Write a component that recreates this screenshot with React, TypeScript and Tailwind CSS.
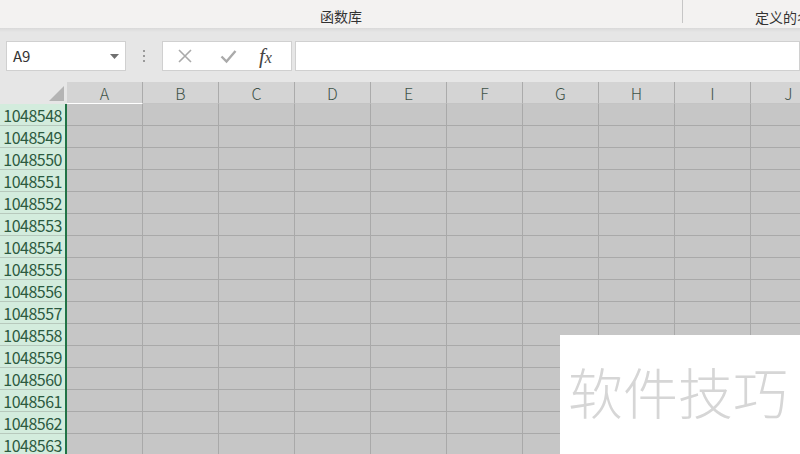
const COLS = ["A", "B", "C", "D", "E", "F", "G", "H", "I", "J"];
const ROWS = Array.from({ length: 16 }, (_, i) => 1048548 + i);

export default function App() {
  return (
    <div
      className="relative w-[800px] h-[454px] overflow-hidden bg-[#e6e6e6]"
      style={{ fontFamily: '"Noto Sans CJK SC", "Noto Sans", sans-serif' }}
    >
      {/* Ribbon group labels */}
      <div className="flex h-[28px] bg-[#f3f2f1] text-[14px] text-[#333]">
        <div className="w-[682px] shrink-0 flex items-start justify-center pt-[6px] leading-[20px]">函数库</div>
        <div className="w-px h-[23px] shrink-0 bg-[#c6c6c6]" />
        <div className="flex-1 min-w-0 overflow-hidden pl-[72px] pt-[7px] leading-[20px] whitespace-nowrap">定义的名称</div>
      </div>
      <div className="h-[4px] bg-gradient-to-b from-[#d9d9d9] to-[#e6e6e6]" />

      {/* Formula bar */}
      <div className="flex items-center h-[50px] pl-[6px] pb-[2px]">
        <div className="w-[120px] h-[30px] shrink-0 bg-white border border-[#d0d0d0] flex items-center justify-between pl-[6px] pr-[6px] text-[15px] text-[#333]">
          <span>A9</span>
          <svg width="9" height="5" viewBox="0 0 9 5"><path d="M0 0h9L4.5 5z" fill="#707070" /></svg>
        </div>
        <div className="w-[36px] shrink-0 flex flex-col items-center gap-[3px]">
          <span className="w-[2px] h-[2px] bg-[#9a9a9a]" />
          <span className="w-[2px] h-[2px] bg-[#9a9a9a]" />
          <span className="w-[2px] h-[2px] bg-[#9a9a9a]" />
        </div>
        <div className="w-[130px] h-[30px] shrink-0 bg-white border border-[#d0d0d0] flex items-center">
          <svg className="ml-[14px]" width="16" height="16" viewBox="0 0 16 16">
            <path d="M2 2l12 12M14 2L2 14" stroke="#aaaaaa" strokeWidth="1.6" />
          </svg>
          <svg className="ml-[27px]" width="17" height="16" viewBox="0 0 17 16">
            <path d="M1.5 8.5l5 5L15.5 3" stroke="#aaaaaa" strokeWidth="2.4" fill="none" />
          </svg>
          <span
            className="ml-[22px] text-[21px] italic text-[#444] leading-none"
            style={{ fontFamily: '"Liberation Serif", serif' }}
          >
            f<span className="text-[16px]">x</span>
          </span>
        </div>
        <div className="flex-1 h-[30px] ml-[3px] bg-white border border-[#d0d0d0]" />
      </div>

      {/* Grid */}
      <div className="flex flex-col">
        <div className="flex h-[22px] bg-[#d4d4d4]">
          <div className="w-[67px] shrink-0 h-full bg-[#e6e6e6] flex items-end justify-end pr-[3px] pb-[3px]">
            <svg width="15" height="15" viewBox="0 0 15 15"><path d="M15 0v15H0z" fill="#b4b4b4" /></svg>
          </div>
          {COLS.map((c, i) => (
            <div
              key={c}
              className={`w-[76px] shrink-0 h-full flex items-center justify-center border-r border-[#ababab] text-[16px] font-light text-[#3f5348] border-b ${
                i === 0 ? "border-b-white" : "border-b-[#c4c4c4]"
              }`}
            >
              {c}
            </div>
          ))}
        </div>
        {ROWS.map((r) => (
          <div key={r} className="flex h-[22px]">
            <div className="w-[65px] shrink-0 h-full bg-[#d3ecdd] border-b border-[#b7c9bd] flex items-center justify-end pr-[3px] text-[16px] text-[#2c5a40] tracking-[-0.5px]">
              {r}
            </div>
            <div className="w-[2px] shrink-0 h-full bg-[#217346]" />
            {COLS.map((c) => (
              <div key={c} className="w-[76px] shrink-0 h-full bg-[#c6c6c6] border-r border-b border-[#a9a9a9]" />
            ))}
          </div>
        ))}
      </div>

      {/* Watermark */}
      <div className="absolute left-[560px] top-[335px] w-[240px] h-[119px] bg-white flex items-start pt-[28px] pl-[8px]">
        <span className="text-[55px] text-[#d6d6d6] leading-none font-light whitespace-nowrap">软件技巧</span>
      </div>
    </div>
  );
}
